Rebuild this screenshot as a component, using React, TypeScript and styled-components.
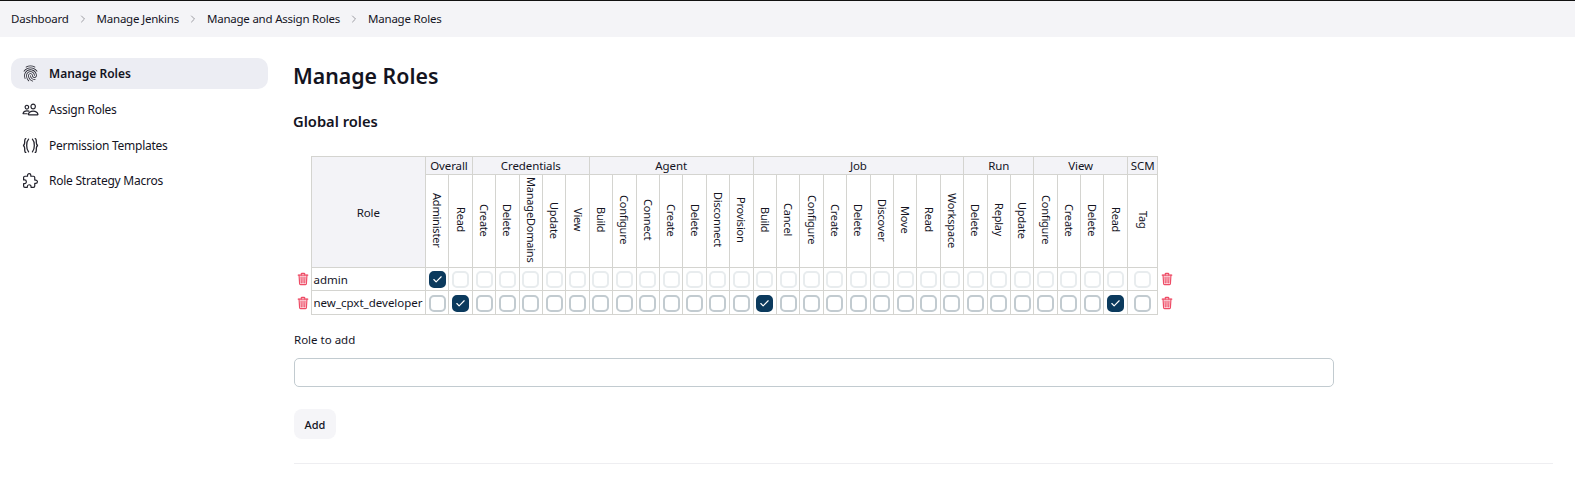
import { FC, ReactNode } from 'react'
import { createGlobalStyle, styled } from 'styled-components'
import { ChevronRight, Check } from 'lucide-react'
import { IoExtensionPuzzleOutline, IoFingerPrintOutline, IoPeopleOutline, IoTrashOutline } from 'react-icons/io5'

const GlobalStyle = createGlobalStyle`
  html, body {
    margin: 0;
    background: #fff;
    color: #14141f;
    font-family: 'Noto Sans', 'Open Sans', sans-serif;
    font-size: 12px;
  }
`

const groups = [
  { name: 'Overall', perms: ['Administer', 'Read'] },
  { name: 'Credentials', perms: ['Create', 'Delete', 'ManageDomains', 'Update', 'View'] },
  { name: 'Agent', perms: ['Build', 'Configure', 'Connect', 'Create', 'Delete', 'Disconnect', 'Provision'] },
  { name: 'Job', perms: ['Build', 'Cancel', 'Configure', 'Create', 'Delete', 'Discover', 'Move', 'Read', 'Workspace'] },
  { name: 'Run', perms: ['Delete', 'Replay', 'Update'] },
  { name: 'View', perms: ['Configure', 'Create', 'Delete', 'Read'] },
  { name: 'SCM', perms: ['Tag'] },
]

const perms = groups.flatMap((g) => g.perms.map((p) => `${g.name}/${p}`))

const roles = [
  { name: 'admin', granted: ['Overall/Administer'], muted: true },
  { name: 'new_cpxt_developer', granted: ['Overall/Read', 'Job/Build', 'View/Read'], muted: false },
]

const Page = styled.div`
  width: 1575px;
  height: 486px;
  overflow: hidden;
  border-top: 1px solid #111;
  box-sizing: border-box;
`

const Breadcrumbs = styled.nav`
  display: flex;
  align-items: center;
  height: 36px;
  padding-left: 11px;
  background: #f4f4f7;
`

const Crumb = styled.span`
  font-size: 11.5px;
  line-height: 36px;
  letter-spacing: -0.22px;
`

const Separator = styled(ChevronRight)`
  width: 12px;
  height: 12px;
  margin: 0 8px;
  color: #9c9ca2;
`

const Body = styled.div`
  display: flex;
`

const Sidebar = styled.aside`
  width: 257px;
  margin: 21px 26px 0 11px;
  flex: none;
`

const SideLink = styled.a<{ $active?: boolean }>`
  display: flex;
  align-items: center;
  gap: 10px;
  height: ${(p) => (p.$active ? '31px' : '35.5px')};
  margin-bottom: ${(p) => (p.$active ? '3px' : '0')};
  padding-left: 11px;
  border-radius: 10px;
  background: ${(p) => (p.$active ? '#ecedf3' : 'transparent')};
  font-size: 12px;
  letter-spacing: ${(p) => (p.$active ? '0' : '-0.25px')};
  font-weight: ${(p) => (p.$active ? 600 : 400)};
  svg {
    width: 17px;
    height: 17px;
    flex: none;
    color: #22222c;
  }
  svg.thick path {
    stroke-width: 36;
  }
`

const Main = styled.main`
  width: 1259px;
`

const Title = styled.h1`
  margin: 23px 0 0 -1px;
  font-size: 21.3px;
  line-height: 32px;
  font-weight: 600;
`

const Subtitle = styled.h2`
  margin: 19px 0 0 -1px;
  font-size: 14.7px;
  line-height: 20px;
  font-weight: 600;
`

const RolesTable = styled.table`
  margin-top: 25px;
  border-collapse: collapse;
  table-layout: fixed;
  width: 882px;
`

const GroupHead = styled.th`
  height: 17px;
  padding: 0;
  border: 1px solid #d4d4d0;
  background: #f3f3f7;
  font-size: 11.5px;
  font-weight: 400;
  line-height: 17px;
  letter-spacing: -0.1px;
  text-align: center;
`

const PermHead = styled.th`
  height: 91px;
  padding: 1px 0 0;
  border: 1px solid #d4d4d0;
  font-size: 11px;
  font-weight: 400;
  letter-spacing: -0.2px;
  text-align: center;
  vertical-align: middle;
`

const Vertical = styled.span`
  display: inline-block;
  writing-mode: vertical-rl;
  line-height: 22px;
  white-space: nowrap;
`

const RoleRow = styled.tr`
  height: 23px;
  &:last-child {
    height: 24px;
  }
`

const RoleName = styled.td`
  padding: 0 0 0 2px;
  border: 1px solid #d4d4d0;
  font-size: 11.5px;
  white-space: nowrap;
  overflow: hidden;
`

const BoxCell = styled.td`
  padding: 0;
  border: 1px solid #d4d4d0;
  text-align: center;
  vertical-align: middle;
`

const IconCell = styled.td<{ $side: 'left' | 'right' }>`
  padding: 0;
  text-align: ${(p) => (p.$side === 'left' ? 'left' : 'right')};
  vertical-align: middle;
  line-height: 0;
  color: #ee4c66;
  svg {
    width: 14px;
    height: 14px;
    margin: ${(p) => (p.$side === 'left' ? '0 0 0 2px' : '0 2px 0 0')};
  }
  svg path {
    stroke-width: 44;
  }
`

const Box = styled.span<{ $checked: boolean; $muted: boolean }>`
  display: inline-flex;
  align-items: center;
  justify-content: center;
  box-sizing: border-box;
  width: 17px;
  height: 17px;
  margin-top: 1px;
  vertical-align: middle;
  border-radius: 5px;
  border: 2px solid ${(p) => (p.$checked ? '#0b3a5d' : p.$muted ? '#e8ecee' : '#c2cbd0')};
  background: ${(p) => (p.$checked ? '#0b3a5d' : '#fff')};
  color: #fff;
  svg {
    width: 11px;
    height: 11px;
    stroke-width: 2.5;
  }
`

const FieldLabel = styled.label`
  display: block;
  margin-top: 16px;
  font-size: 11.5px;
  line-height: 17px;
`

const TextInput = styled.input`
  display: block;
  box-sizing: border-box;
  width: 1040px;
  height: 29px;
  margin-top: 10px;
  border: 1px solid #c2cbd0;
  border-radius: 5px;
  outline: none;
`

const AddButton = styled.button`
  display: block;
  width: 42px;
  height: 30px;
  margin-top: 22px;
  padding: 0;
  border: none;
  border-radius: 8px;
  background: #f5f5f8;
  color: #14141f;
  font-family: inherit;
  font-size: 11px;
  font-weight: 500;
`

const Rule = styled.hr`
  margin: 24px 0 0;
  border: none;
  border-top: 1px solid #eeeef1;
`

const BracesIcon = () => (
  <svg viewBox="0 0 16 16" fill="none" stroke="currentColor" strokeWidth="1.2" strokeLinecap="round">
    <path d="M3.6 1.5C2.3 1.5 2.6 3.5 2.5 5.5 2.4 7 2 7.8 1 8c1 .2 1.4 1 1.5 2.5.1 2-.2 4 1.1 4" />
    <path d="M6.2 2C4.8 3.5 4.4 5.6 4.4 8s.4 4.5 1.8 6" />
    <path d="M12.4 1.5c1.3 0 1 2 1.1 4 .1 1.5.5 2.3 1.5 2.5-1 .2-1.4 1-1.5 2.5-.1 2 .2 4-1.1 4" />
    <path d="M9.8 2c1.4 1.5 1.8 3.6 1.8 6s-.4 4.5-1.8 6" />
  </svg>
)

const links: { label: string; icon: ReactNode; active?: boolean }[] = [
  { label: 'Manage Roles', icon: <IoFingerPrintOutline />, active: true },
  { label: 'Assign Roles', icon: <IoPeopleOutline className="thick" /> },
  { label: 'Permission Templates', icon: <BracesIcon /> },
  { label: 'Role Strategy Macros', icon: <IoExtensionPuzzleOutline className="thick" /> },
]

const crumbs = ['Dashboard', 'Manage Jenkins', 'Manage and Assign Roles', 'Manage Roles']

const App: FC = () => {
  return (
    <Page>
      <GlobalStyle />
      <Breadcrumbs>
        {crumbs.map((c, i) => (
          <span key={c} style={{ display: 'contents' }}>
            {i > 0 && <Separator />}
            <Crumb>{c}</Crumb>
          </span>
        ))}
      </Breadcrumbs>
      <Body>
        <Sidebar>
          {links.map((l) => (
            <SideLink key={l.label} $active={l.active}>
              {l.icon}
              {l.label}
            </SideLink>
          ))}
        </Sidebar>
        <Main>
          <Title>Manage Roles</Title>
          <Subtitle>Global roles</Subtitle>
          <RolesTable>
            <colgroup>
              <col style={{ width: 17 }} />
              <col style={{ width: 114.5 }} />
              {perms.map((p) => (
                <col key={p} style={{ width: p === 'SCM/Tag' ? 30.5 : 23.4 }} />
              ))}
              <col style={{ width: 18 }} />
            </colgroup>
            <thead>
              <tr>
                <th />
                <GroupHead rowSpan={2}>Role</GroupHead>
                {groups.map((g) => (
                  <GroupHead key={g.name} colSpan={g.perms.length}>
                    {g.name}
                  </GroupHead>
                ))}
                <th />
              </tr>
              <tr>
                <th />
                {perms.map((p) => (
                  <PermHead key={p}>
                    <Vertical>{p.split('/')[1]}</Vertical>
                  </PermHead>
                ))}
                <th />
              </tr>
            </thead>
            <tbody>
              {roles.map((r) => (
                <RoleRow key={r.name}>
                  <IconCell $side="left">
                    <IoTrashOutline />
                  </IconCell>
                  <RoleName>{r.name}</RoleName>
                  {perms.map((p) => {
                    const checked = r.granted.includes(p)
                    return (
                      <BoxCell key={p}>
                        <Box $checked={checked} $muted={r.muted}>
                          {checked && <Check />}
                        </Box>
                      </BoxCell>
                    )
                  })}
                  <IconCell $side="right">
                    <IoTrashOutline />
                  </IconCell>
                </RoleRow>
              ))}
            </tbody>
          </RolesTable>
          <FieldLabel>Role to add</FieldLabel>
          <TextInput />
          <AddButton>Add</AddButton>
          <Rule />
        </Main>
      </Body>
    </Page>
  )
}

export default App
